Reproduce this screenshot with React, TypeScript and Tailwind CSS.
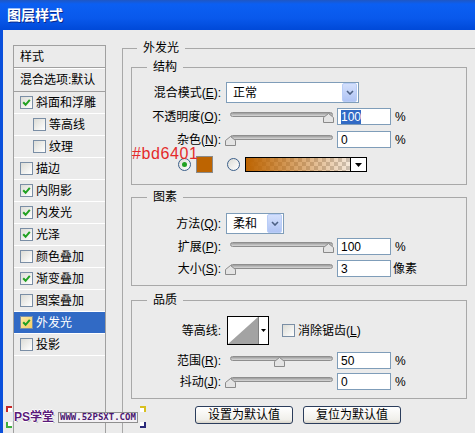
import React from "react";

const U = ({ c }: { c: string }) => <span className="underline">{c}</span>;

function Check({ checked, hot }: { checked?: boolean; hot?: boolean }) {
  return (
    <span
      className={`flex h-[13px] w-[13px] shrink-0 items-center justify-center border border-[#7a8ea5] ${
        hot
          ? "bg-[image:linear-gradient(135deg,#fbe7a6,#f6cf62)]"
          : "bg-[image:linear-gradient(135deg,#dcdcd6,#ffffff)]"
      }`}
    >
      {checked && (
        <svg width="9" height="9" viewBox="0 0 9 9">
          <path d="M1.2 4.2 L3.6 6.8 L7.8 1.8" stroke="#21a121" strokeWidth="2" fill="none" />
        </svg>
      )}
    </span>
  );
}

function Item({
  label,
  checked,
  indent,
  selected,
}: {
  label: string;
  checked?: boolean;
  indent?: boolean;
  selected?: boolean;
}) {
  return (
    <div
      className={`flex h-[22px] items-center border-b border-white ${indent ? "pl-[19px]" : "pl-[6px]"} ${
        selected ? "bg-[#316ac5] text-white" : ""
      }`}
    >
      <Check checked={checked} hot={selected} />
      <span className="ml-[3px] text-[12px] leading-none">{label}</span>
    </div>
  );
}

function Slider({ thumb }: { thumb: string }) {
  return (
    <div className="relative h-[17px] w-[108px] shrink-0">
      <div className="absolute left-[5px] top-[4px] h-[5px] w-[103px] rounded-full border border-[#8e8e8e] bg-[image:linear-gradient(to_bottom,#9c9c9c,#d8d8d8)]" />
      <svg className={`absolute top-[5px] ${thumb}`} width="11" height="10" viewBox="0 0 11 10">
        <path d="M0.5 9.5 V4.5 L5.5 0.5 L10.5 4.5 V9.5 Z" fill="#e4e4e4" stroke="#8a8a8a" />
      </svg>
    </div>
  );
}

function Field({ value, sel }: { value: string; sel?: boolean }) {
  return (
    <div className="ml-[4px] flex h-[17px] w-[54px] shrink-0 items-center border border-[#7f9db9] bg-white pl-[3px] text-[12px] leading-none">
      {sel ? <span className="bg-[#316ac5] leading-[14px] text-white">{value}</span> : <span>{value}</span>}
    </div>
  );
}

function DropBtn() {
  return (
    <span className="mr-[1px] flex h-[19px] w-[15px] items-center justify-center rounded-[2px] border border-[#b9cdf7] bg-[image:linear-gradient(to_bottom,#d4e0fc,#b0c4f4)]">
      <svg width="8" height="5" viewBox="0 0 8 5">
        <path d="M1 1 L4 4 L7 1" stroke="#4d6185" strokeWidth="1.6" fill="none" />
      </svg>
    </span>
  );
}

function Label({ children }: { children: React.ReactNode }) {
  return <div className="w-[89px] shrink-0 text-right text-[12px] leading-none">{children}</div>;
}

function Radio({ on }: { on?: boolean }) {
  return (
    <span className="flex h-[13px] w-[13px] shrink-0 items-center justify-center rounded-full border border-[#3b5f8a] bg-[image:linear-gradient(135deg,#dcdcd6,#ffffff)]">
      {on && <span className="h-[5px] w-[5px] rounded-full bg-[#21a121]" />}
    </span>
  );
}

function Group({
  title,
  className,
  children,
}: {
  title: string;
  className: string;
  children?: React.ReactNode;
}) {
  return (
    <div className={`relative border border-[#a8a8a8] ${className}`}>
      <span className="absolute -top-[9px] left-[15px] bg-[#ebebeb] px-[6px] text-[12px] leading-[16px]">{title}</span>
      {children}
    </div>
  );
}

function Btn({ children, className }: { children: React.ReactNode; className?: string }) {
  return (
    <div
      className={`flex h-[18px] w-[98px] items-center justify-center rounded-[3px] border border-[#2b3d5c] bg-[image:linear-gradient(to_bottom,#ffffff,#f0efea_80%,#d8d3c8)] text-[12px] leading-none ${
        className ?? ""
      }`}
    >
      {children}
    </div>
  );
}

function Corner({ cls }: { cls: string }) {
  return <div className={`h-[6px] w-[6px] border-[#9a9a9a] bg-white ${cls}`} />;
}

export default function App() {
  return (
    <div className="relative h-[433px] w-[475px] overflow-hidden bg-[#ebebeb] font-[family-name:'Liberation_Sans','Noto_Sans_CJK_SC',sans-serif] text-black">
      <div className="flex h-[30px] items-center bg-[image:linear-gradient(to_bottom,#1f57c4_0px,#0b5ff2_4px,#0959ec_18px,#0049d8_30px)] pl-[7px]">
        <span className="text-[14px] font-bold leading-none text-white [text-shadow:1px_1px_0_#0a2a8a]">图层样式</span>
      </div>
      <div className="flex h-[403px]">
        <div className="w-[3px] shrink-0 bg-[#0a50dc]" />
        {/* style list */}
        <div className="ml-[10px] mt-[15px] h-[400px] w-[93px] shrink-0 border border-[#a0a0a0]">
          <div className="flex h-[22px] items-center border-b border-[#a0a0a0] pl-[6px] text-[12px] leading-none shadow-[0_1px_0_#ffffff]">
            样式
          </div>
          <div className="flex h-[24px] items-center border-b border-[#a0a0a0] pl-[6px] text-[12px] leading-none">
            混合选项:默认
          </div>
          <Item label="斜面和浮雕" checked />
          <Item label="等高线" indent />
          <Item label="纹理" indent />
          <Item label="描边" />
          <Item label="内阴影" checked />
          <Item label="内发光" checked />
          <Item label="光泽" checked />
          <Item label="颜色叠加" />
          <Item label="渐变叠加" checked />
          <Item label="图案叠加" />
          <Item label="外发光" checked selected />
          <Item label="投影" />
        </div>

        {/* outer group */}
        <div className="relative ml-[16px] mt-[18px] h-[400px] w-[360px] shrink-0 border border-[#a8a8a8]">
          <span className="absolute -top-[9px] left-[14px] bg-[#ebebeb] px-[6px] text-[12px] leading-[16px]">外发光</span>

          <Group title="结构" className="ml-[8px] mt-[18px] h-[118px] w-[336px] pt-[14px]">
            <div className="flex h-[21px] items-center">
              <Label>
                混合模式(<U c="E" />):
              </Label>
              <div className="ml-[5px] flex h-[21px] w-[133px] items-center border border-[#7f9db9] bg-white pl-[6px]">
                <span className="flex-1 text-[12px] leading-none">正常</span>
                <DropBtn />
              </div>
            </div>
            <div className="mt-[5px] flex h-[17px] items-center">
              <Label>
                不透明度(<U c="O" />):
              </Label>
              <div className="ml-[4px]">
                <Slider thumb="left-[98px]" />
              </div>
              <Field value="100" sel />
              <span className="ml-[4px] text-[12px] leading-none">%</span>
            </div>
            <div className="mt-[6px] flex h-[17px] items-center">
              <Label>
                杂色(<U c="N" />):
              </Label>
              <div className="ml-[4px]">
                <Slider thumb="left-0" />
              </div>
              <Field value="0" />
              <span className="ml-[4px] text-[12px] leading-none">%</span>
            </div>
            <div className="mt-[9px] flex h-[15px] items-center pl-[46px]">
              <Radio on />
              <div className="ml-[5px] h-[17px] w-[17px] border border-[#8a8a8a] bg-[#bd6401]" />
              <div className="ml-[14px]">
                <Radio />
              </div>
              <div className="ml-[5px] flex h-[15px] w-[122px] border border-black">
                <div className="flex-1 bg-[image:repeating-conic-gradient(#cfcfcf_0%_25%,#ffffff_0%_50%)] bg-[length:8px_8px]">
                  <div className="h-full w-full bg-[image:linear-gradient(to_right,#bd6401,rgba(189,100,1,0.15))]" />
                </div>
                <div className="flex w-[16px] items-center justify-center border-l border-black bg-white">
                  <svg width="7" height="4" viewBox="0 0 7 4">
                    <path d="M0 0H7L3.5 4Z" fill="#000" />
                  </svg>
                </div>
              </div>
            </div>
            <span className="absolute left-[0px] top-[80px] text-[16px] leading-[12px] tracking-[0.6px] text-[#e42a2a]">#bd6401</span>
          </Group>

          <Group title="图素" className="ml-[8px] mt-[12px] h-[89px] w-[336px] pt-[15px]">
            <div className="flex h-[21px] items-center">
              <Label>
                方法(<U c="Q" />):
              </Label>
              <div className="ml-[5px] flex h-[21px] w-[58px] items-center border border-[#7f9db9] bg-white pl-[6px]">
                <span className="flex-1 text-[12px] leading-none">柔和</span>
                <DropBtn />
              </div>
            </div>
            <div className="mt-[4px] flex h-[17px] items-center">
              <Label>
                扩展(<U c="P" />):
              </Label>
              <div className="ml-[4px]">
                <Slider thumb="left-[98px]" />
              </div>
              <Field value="100" />
              <span className="ml-[4px] text-[12px] leading-none">%</span>
            </div>
            <div className="mt-[5px] flex h-[17px] items-center">
              <Label>
                大小(<U c="S" />):
              </Label>
              <div className="ml-[4px]">
                <Slider thumb="left-0" />
              </div>
              <Field value="3" />
              <span className="ml-[2px] text-[12px] leading-none">像素</span>
            </div>
          </Group>

          <Group title="品质" className="ml-[8px] mt-[14px] h-[99px] w-[336px] pt-[15px]">
            <div className="flex h-[29px] items-center">
              <Label>等高线:</Label>
              <div className="ml-[6px] flex h-[29px] w-[42px] border border-black bg-white">
                <svg width="30" height="27" viewBox="0 0 30 27">
                  <path d="M0 27 L30 0 L30 27 Z" fill="#a3a3a3" />
                </svg>
                <div className="flex flex-1 items-center justify-center border-l border-[#808080]">
                  <svg width="5" height="3" viewBox="0 0 5 3">
                    <path d="M0 0H5L2.5 3Z" fill="#000" />
                  </svg>
                </div>
              </div>
              <div className="ml-[13px]">
                <Check />
              </div>
              <span className="ml-[3px] text-[12px] leading-none">
                消除锯齿(<U c="L" />)
              </span>
            </div>
            <div className="mt-[7px] flex h-[17px] items-center">
              <Label>
                范围(<U c="R" />):
              </Label>
              <div className="ml-[4px]">
                <Slider thumb="left-[49px]" />
              </div>
              <Field value="50" />
              <span className="ml-[4px] text-[12px] leading-none">%</span>
            </div>
            <div className="mt-[4px] flex h-[17px] items-center">
              <Label>
                抖动(<U c="J" />):
              </Label>
              <div className="ml-[4px]">
                <Slider thumb="left-0" />
              </div>
              <Field value="0" />
              <span className="ml-[4px] text-[12px] leading-none">%</span>
            </div>
          </Group>

          <div className="ml-[72px] mt-[7px] flex gap-[10px]">
            <Btn>设置为默认值</Btn>
            <Btn>复位为默认值</Btn>
          </div>
        </div>
      </div>

      {/* watermark */}
      <div className="absolute left-[6px] top-[406px] flex items-center">
        <div className="flex h-[22px] flex-col justify-between">
          <Corner cls="border-l-2 border-t-2 border-l-[#c62828] border-t-[#c62828]" />
          <Corner cls="border-b-2 border-l-2 border-b-[#3fae3f] border-l-[#3fae3f]" />
        </div>
        <span className="ml-[2px] text-[12px] font-bold leading-none text-[#5a1a7a] [text-shadow:1px_0_0_#fff,-1px_0_0_#fff,0_1px_0_#fff,0_-1px_0_#fff,1px_1px_0_#999]">
          PS学堂
        </span>
        <span className="ml-[4px] border border-[#8f8f8f] bg-[#f3f1f4] px-[1px] font-[family-name:'DejaVu_Sans_Mono',monospace] text-[9px] font-bold leading-[9px] text-[#4a1670]">
          WWW.52PSXT.COM
        </span>
        <div className="ml-[2px] flex h-[22px] flex-col justify-between">
          <Corner cls="border-r-2 border-t-2 border-r-[#d8c020] border-t-[#d8c020]" />
          <Corner cls="border-b-2 border-r-2 border-b-[#2a2a7a] border-r-[#2a2a7a]" />
        </div>
      </div>
    </div>
  );
}
